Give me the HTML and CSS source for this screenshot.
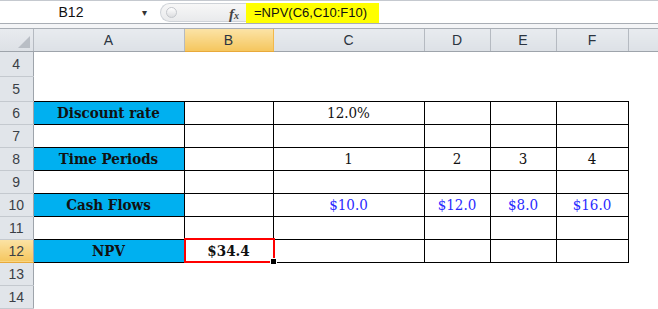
FILE: index.html
```html
<!DOCTYPE html>
<html lang="en">
<head>
  <meta charset="utf-8">
  <title>NPV</title>
  <link rel="stylesheet" href="styles.css">
</head>
<body>

  <div class="formulaBar">
    <div class="nameBox">B12</div>
    <div class="nameDrop">&#9662;</div>
    <div class="grip"><span class="knob"></span></div>
    <div class="fx">f<sub>x</sub></div>
    <div class="formula"><span class="formulaText">=NPV(C6,C10:F10)</span></div>
  </div>
  <div class="barGap"></div>

  <table class="sheet">
    <colgroup>
      <col style="width:33px">
      <col style="width:151px">
      <col style="width:89px">
      <col style="width:151px">
      <col style="width:66px">
      <col style="width:66px">
      <col style="width:72px">
      <col style="width:30px">
    </colgroup>
    <tr class="colHeads">
      <th class="corner"><span class="cornerTri"></span></th>
      <th>A</th>
      <th class="sel">B</th>
      <th>C</th>
      <th>D</th>
      <th>E</th>
      <th>F</th>
      <th></th>
    </tr>
    <tr class="tall">
      <th class="rowHead">4</th>
      <td></td><td></td><td></td><td></td><td></td><td></td><td></td>
    </tr>
    <tr class="tall">
      <th class="rowHead">5</th>
      <td></td><td></td><td></td><td></td><td></td><td></td><td></td>
    </tr>
    <tr>
      <th class="rowHead">6</th>
      <td class="grid label">Discount rate</td>
      <td class="grid"></td>
      <td class="grid num">12.0%</td>
      <td class="grid"></td><td class="grid"></td><td class="grid"></td>
      <td></td>
    </tr>
    <tr>
      <th class="rowHead">7</th>
      <td class="grid"></td><td class="grid"></td><td class="grid"></td>
      <td class="grid"></td><td class="grid"></td><td class="grid"></td>
      <td></td>
    </tr>
    <tr>
      <th class="rowHead">8</th>
      <td class="grid label">Time Periods</td>
      <td class="grid"></td>
      <td class="grid num">1</td>
      <td class="grid num">2</td>
      <td class="grid num">3</td>
      <td class="grid num">4</td>
      <td></td>
    </tr>
    <tr>
      <th class="rowHead">9</th>
      <td class="grid"></td><td class="grid"></td><td class="grid"></td>
      <td class="grid"></td><td class="grid"></td><td class="grid"></td>
      <td></td>
    </tr>
    <tr>
      <th class="rowHead">10</th>
      <td class="grid label">Cash Flows</td>
      <td class="grid"></td>
      <td class="grid num cash">$10.0</td>
      <td class="grid num cash">$12.0</td>
      <td class="grid num cash">$8.0</td>
      <td class="grid num cash">$16.0</td>
      <td></td>
    </tr>
    <tr>
      <th class="rowHead">11</th>
      <td class="grid"></td><td class="grid"></td><td class="grid"></td>
      <td class="grid"></td><td class="grid"></td><td class="grid"></td>
      <td></td>
    </tr>
    <tr>
      <th class="rowHead sel">12</th>
      <td class="grid label">NPV</td>
      <td class="grid num result">$34.4<span class="activeBox"></span><span class="fillHandle"></span></td>
      <td class="grid"></td><td class="grid"></td><td class="grid"></td><td class="grid"></td>
      <td></td>
    </tr>
    <tr>
      <th class="rowHead">13</th>
      <td></td><td></td><td></td><td></td><td></td><td></td><td></td>
    </tr>
    <tr>
      <th class="rowHead">14</th>
      <td></td><td></td><td></td><td></td><td></td><td></td><td></td>
    </tr>
  </table>

</body>
</html>
```

FILE: styles.css
```css
html, body {
  margin: 0;
  padding: 0;
  background: white;
  overflow: hidden;
}

body {
  width: 658px;
  height: 309px;
  font-family: "Liberation Sans", Arial, sans-serif;
}

/* formula bar */

.formulaBar {
  display: flex;
  align-items: stretch;
  height: 22px;
  border-top: 1px solid #c5c9cf;
  border-bottom: 1px solid #a9aeb5;
  background: white;
}

.nameBox {
  width: 142px;
  font-size: 14px;
  line-height: 22px;
  text-align: center;
  color: #111;
}

.nameDrop {
  width: 18px;
  font-size: 10px;
  line-height: 23px;
  color: #333;
}

.grip {
  width: 68px;
  margin: 2px 0 1px;
  border: 1px solid #cfd3d8;
  border-right: none;
  border-radius: 10px 0 0 10px;
  background: linear-gradient(#f7f7f7, #e9eaec);
  display: flex;
  align-items: center;
}

.knob {
  width: 9px;
  height: 9px;
  margin-left: 5px;
  border-radius: 50%;
  border: 1px solid #c4c7cc;
  background: linear-gradient(#fff, #dcdde0);
}

.fx {
  width: 17px;
  font-family: "Liberation Serif", serif;
  font-style: italic;
  font-weight: bold;
  font-size: 15px;
  line-height: 21px;
  color: #444;
  background: linear-gradient(#f7f7f7, #e9eaec);
  margin: 2px 0 1px;
  border-top: 1px solid #cfd3d8;
  border-bottom: 1px solid #cfd3d8;
}

.fx sub {
  font-size: 10px;
  vertical-align: 0;
}

.formula {
  flex: 1;
  padding-top: 2px;
}

.formulaText {
  display: inline-block;
  height: 20px;
  padding: 0 12px 0 8px;
  background: #ffff00;
  font-size: 13px;
  line-height: 20px;
  color: #111;
}

.barGap {
  height: 4px;
  background: #f4f5f7;
  border-bottom: 1px solid #a9aeb5;
}

/* sheet grid */

.sheet {
  border-collapse: collapse;
  table-layout: fixed;
  width: 658px;
}

.sheet tr {
  height: 23px;
}

.sheet tr.colHeads {
  height: 22px;
}

.sheet tr.tall {
  height: 25px;
}

.sheet th, .sheet td {
  padding: 0;
  overflow: hidden;
  white-space: nowrap;
}

.colHeads th {
  background: linear-gradient(#e8ebef, #dde1e6);
  border-right: 1px solid #b5bac1;
  border-bottom: 1px solid #9ea4ab;
  font-weight: normal;
  font-size: 14px;
  color: #2b3440;
}

.colHeads th.sel {
  background: linear-gradient(#fbe3a6, #f5c65e);
  border-right-color: #f2b84b;
  border-bottom-color: #e8a93a;
}

.corner {
  position: relative;
}

.cornerTri {
  position: absolute;
  right: 3px;
  bottom: 3px;
  width: 0;
  height: 0;
  border-left: 12px solid transparent;
  border-bottom: 12px solid #b9bec5;
}

.rowHead {
  background: #e1e5ea;
  border-right: 1px solid #9ea4ab;
  border-bottom: 1px solid #c4c9cf;
  font-weight: normal;
  font-size: 14px;
  color: #3a3f46;
  text-align: center;
}

.rowHead.sel {
  background: linear-gradient(#fbe3a6, #f5c65e);
  border-bottom-color: #e8a93a;
}

.grid {
  border: 1px solid #000;
}

.label {
  background: #00b0f0;
  text-align: center;
  font-family: "DejaVu Serif Condensed", "DejaVu Serif", serif;
  font-weight: bold;
  font-size: 15px;
  color: #111;
}

.num {
  text-align: center;
  font-family: "DejaVu Serif Condensed", "DejaVu Serif", serif;
  font-size: 15px;
  color: #111;
}

.cash {
  color: #2a2aff;
}

.sheet td.result {
  position: relative;
  overflow: visible;
  font-weight: bold;
}

.activeBox {
  position: absolute;
  left: -1px;
  top: -2px;
  right: -2px;
  bottom: -1px;
  border: 2px solid #ff0000;
}

.fillHandle {
  position: absolute;
  right: -4px;
  bottom: -3px;
  width: 5px;
  height: 5px;
  background: #000;
  border: 1px solid #fff;
}
```
